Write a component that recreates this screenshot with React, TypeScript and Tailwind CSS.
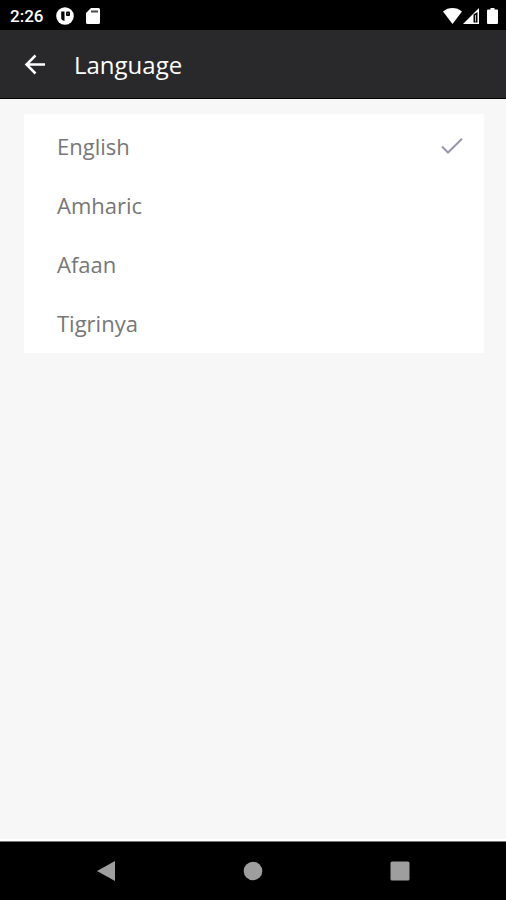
import { useState } from 'react'

const languages = ['English', 'Amharic', 'Afaan', 'Tigrinya']

function StatusBar() {
  return (
    <div className="flex h-[30px] items-center bg-black pl-[10px] pr-2 pt-px text-white">
      <span className="font-[Roboto,sans-serif] text-[17px] font-medium leading-5">2:26</span>
      <svg className="ml-[13px] size-[18px]" viewBox="0 0 18 18" aria-hidden="true">
        <circle cx="9" cy="9" r="8.800" fill="#fff" />
        <path d="M5.200 4.500h3.300v9.500C6.500 13.500 5.200 12.500 5.200 11z" fill="#000" />
        <rect x="10" y="4.500" width="4" height="4.500" rx="1" fill="#000" />
        <rect x="11.500" y="6.200" width="1" height="1" fill="#999" />
      </svg>
      <svg className="ml-3 h-4 w-[14px]" viewBox="0 0 14 16" aria-hidden="true">
        <path d="M5 0h7.500A1.500 1.500 0 0 1 14 1.500v13a1.500 1.500 0 0 1-1.500 1.500h-11A1.500 1.500 0 0 1 0 14.500V5z" fill="#fff" />
        <path d="M5 3.500h7" stroke="#000" strokeWidth="2" strokeOpacity=".7" />
      </svg>
      <div className="ml-auto flex items-center">
        <svg className="h-4 w-[19px]" viewBox="0 0 19 16" aria-hidden="true">
          <path d="M0 3.500C5.500-1.100 13.500-1.100 19 3.500L9.500 16z" fill="#fff" />
        </svg>
        <svg className="ml-px h-4 w-4" viewBox="0 0 16 16" aria-hidden="true">
          <path d="M16 0v16H0z" fill="#fff" />
          <path d="M10.500 6.500L14.500 4v10.500h-4z" fill="#000" />
          <path d="M12.500 7v6.500" stroke="#bbb" strokeWidth="1" />
        </svg>
        <svg className="ml-2 h-4 w-[11px]" viewBox="0 0 11 16" aria-hidden="true">
          <path d="M3.500 0h4v1.500H10a1 1 0 0 1 1 1V15a1 1 0 0 1-1 1H1a1 1 0 0 1-1-1V2.500a1 1 0 0 1 1-1h2.500z" fill="#fff" />
        </svg>
      </div>
    </div>
  )
}

function Header() {
  return (
    <header className="flex h-[69px] items-center border-b border-black bg-[#29292b] px-6 pt-px text-white">
      <button type="button" aria-label="Back">
        <svg className="size-[22px]" viewBox="0 0 22 22" fill="none" stroke="#fff" strokeWidth="2.500">
          <path d="M21 10.500H3M11.500 1.500L2.500 10.500l9 9" />
        </svg>
      </button>
      <h1 className="ml-7 text-2xl">Language</h1>
    </header>
  )
}

function NavBar() {
  return (
    <nav className="flex h-[59px] items-center justify-center gap-[127px] border-t border-[#777] bg-black">
      <button type="button" aria-label="Back">
        <svg className="size-5" viewBox="0 0 20 20" fill="#9e9e9e">
          <path d="M19 0v20L1 10z" />
        </svg>
      </button>
      <button type="button" aria-label="Home">
        <svg className="size-5" viewBox="0 0 20 20" fill="#9e9e9e">
          <circle cx="10" cy="10" r="9.300" />
        </svg>
      </button>
      <button type="button" aria-label="Recent apps">
        <svg className="size-5" viewBox="0 0 20 20" fill="#9e9e9e">
          <rect x=".5" y=".5" width="19" height="19" rx="1.500" />
        </svg>
      </button>
    </nav>
  )
}

export default function App() {
  const [selected, setSelected] = useState('English')

  return (
    <div className="flex min-h-screen flex-col bg-[#f7f7f7] font-['Open_Sans',sans-serif]">
      <StatusBar />
      <Header />
      <main className="flex-1 border-b-2 border-white pl-6 pr-[22px] pt-[15px]">
        <div role="radiogroup" aria-label="Language" className="bg-white pt-[3px]">
          {languages.map((language) => (
            <label
              key={language}
              className="flex h-[59px] items-center justify-between pl-[33px] pr-[21px] text-[22px] text-[#777]"
            >
              <input
                type="radio"
                name="language"
                value={language}
                checked={selected === language}
                onChange={() => setSelected(language)}
                className="sr-only"
              />
              {language}
              {selected === language && (
                <svg className="h-[18px] w-[22px]" viewBox="0 0 22 18" fill="none" stroke="#9697aa" strokeWidth="2" aria-hidden="true">
                  <path d="M1 8.500l6 6L21 .8" />
                </svg>
              )}
            </label>
          ))}
        </div>
      </main>
      <NavBar />
    </div>
  )
}
